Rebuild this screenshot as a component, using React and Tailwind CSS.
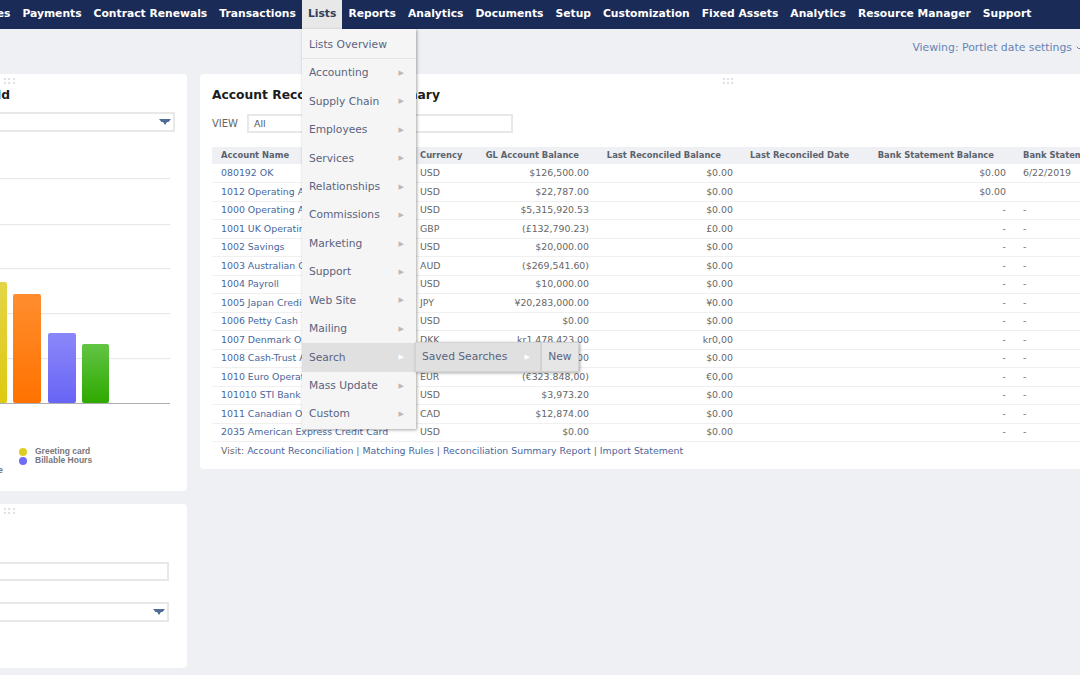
import { ChevronDown } from 'lucide-react'

const NAV = ['Payments', 'Contract Renewals', 'Transactions', 'Lists', 'Reports', 'Analytics', 'Documents', 'Setup', 'Customization', 'Fixed Assets', 'Analytics', 'Resource Manager', 'Support']

const MENU = ['Accounting', 'Supply Chain', 'Employees', 'Services', 'Relationships', 'Commissions', 'Marketing', 'Support', 'Web Site', 'Mailing', 'Search', 'Mass Update', 'Custom']

const ROWS = [
    ['080192 OK', 'USD', '$126,500.00', '$0.00', '$0.00', '6/22/2019'],
    ['1012 Operating Account', 'USD', '$22,787.00', '$0.00', '$0.00', ''],
    ['1000 Operating Account', 'USD', '$5,315,920.53', '$0.00', '-', '-'],
    ['1001 UK Operating', 'GBP', '(£132,790.23)', '£0.00', '-', '-'],
    ['1002 Savings', 'USD', '$20,000.00', '$0.00', '-', '-'],
    ['1003 Australian Operating', 'AUD', '($269,541.60)', '$0.00', '-', '-'],
    ['1004 Payroll', 'USD', '$10,000.00', '$0.00', '-', '-'],
    ['1005 Japan Credit Card', 'JPY', '¥20,283,000.00', '¥0.00', '-', '-'],
    ['1006 Petty Cash', 'USD', '$0.00', '$0.00', '-', '-'],
    ['1007 Denmark Operating', 'DKK', 'kr1.478.423,00', 'kr0,00', '-', '-'],
    ['1008 Cash-Trust Account', 'USD', '$48,000.00', '$0.00', '-', '-'],
    ['1010 Euro Operating', 'EUR', '(€323.848,00)', '€0,00', '-', '-'],
    ['101010 STI Bank', 'USD', '$3,973.20', '$0.00', '-', '-'],
    ['1011 Canadian Operating', 'CAD', '$12,874.00', '$0.00', '-', '-'],
    ['2035 American Express Credit Card', 'USD', '$0.00', '$0.00', '-', '-'],
]

function DragDots() {
    return (
        <div className="grid grid-cols-3 gap-x-[2px] gap-y-[2px] w-[11px]">
            {[0, 1, 2, 3, 4, 5].map(i => <span key={i} className="w-[2px] h-[2px] bg-[#dfe1e6]" />)}
        </div>
    )
}

function Caret({ className }) {
    return (
        <svg width="12" height="6" viewBox="0 0 12 6" className={className}>
            <path d="M0 0H12L9.5 3H8L6 6L4 3H2.5Z" fill="#4d6c96" />
        </svg>
    )
}

function Arrow({ white }) {
    return <span className={`text-[7px] ${white ? 'text-white' : 'text-[#b9b9b9]'}`}>▶</span>
}

function ListsMenu() {
    return (
        <div className="absolute left-0 top-[29px] w-[114px] bg-[#f5f5f5] shadow-[1px_1px_3px_rgba(0,0,0,0.35)] z-20 text-[10.7px] text-[#5a6480] font-normal">
            <div className="h-[30px] flex items-center pt-[3px] px-[7px] border-b border-[#e4e4e4]">Lists Overview</div>
            {MENU.map(item => (
                <div
                    key={item}
                    className={`relative h-[28.45px] flex items-center justify-between pl-[7px] pr-[12px] ${item === 'Search' ? 'bg-[#e0e0e0]' : ''}`}
                >
                    <span>{item}</span>
                    <Arrow white={item === 'Search'} />
                    {item === 'Search' && (
                        <div className="absolute left-[113px] -top-[1px] flex h-[30px] shadow-[1px_1px_3px_rgba(0,0,0,0.35)]">
                            <div className="w-[126px] flex items-center justify-between pl-[6px] pr-[10px] bg-[#e0e0e0] border border-[#d4d4d4]">
                                <span>Saved Searches</span>
                                <Arrow white />
                            </div>
                            <div className="w-[38px] flex items-center justify-center bg-[#e6e6e6] border border-[#d0d0d0]">New</div>
                        </div>
                    )}
                </div>
            ))}
        </div>
    )
}

function BarChart() {
    return (
        <svg width="300" height="270" viewBox="0 0 300 270" className="block">
            <defs>
                <linearGradient id="yellow" x1="0" y1="0" x2="0" y2="1"><stop offset="0" stopColor="#e3d547" /><stop offset="1" stopColor="#dfc90f" /></linearGradient>
                <linearGradient id="orange" x1="0" y1="0" x2="0" y2="1"><stop offset="0" stopColor="#ff8d2e" /><stop offset="1" stopColor="#ff7200" /></linearGradient>
                <linearGradient id="purple" x1="0" y1="0" x2="0" y2="1"><stop offset="0" stopColor="#8b87f9" /><stop offset="1" stopColor="#6864f5" /></linearGradient>
                <linearGradient id="green" x1="0" y1="0" x2="0" y2="1"><stop offset="0" stopColor="#62c444" /><stop offset="1" stopColor="#2eaa00" /></linearGradient>
            </defs>
            {[38, 84, 128, 173, 218].map(y => <rect key={y} x="0" y={y} width="283" height="1.2" fill="#e8e8e8" />)}
            <rect x="92" y="142" width="28" height="121" rx="2" fill="url(#yellow)" />
            <rect x="126" y="154" width="28" height="109" rx="2" fill="url(#orange)" />
            <rect x="161" y="193" width="28" height="70" rx="2" fill="url(#purple)" />
            <rect x="195" y="204" width="27" height="59" rx="2" fill="url(#green)" />
            <rect x="0" y="263" width="283" height="1" fill="#adadad" />
        </svg>
    )
}

function LegendRow({ color, label }) {
    return (
        <div className="flex items-center h-[9px] gap-[8px]">
            <span className="w-[8px] h-[8px] rounded-full" style={{ background: color }} />
            <span>{label}</span>
        </div>
    )
}

export default function App() {
    return (
        <div className="h-[675px] w-[1080px] overflow-hidden bg-[#eef0f4] font-['DejaVu_Sans',sans-serif] relative">

            {/* Top nav */}
            <div className="h-[29px] bg-[#1a2b58] flex items-center text-white font-bold text-[10.75px] -ml-[28px] whitespace-nowrap">
                <div className="px-[6px]">Sales</div>
                {NAV.map((item, i) => (
                    <div
                        key={i}
                        className={`relative h-full flex items-center px-[6px] ${item === 'Lists' ? 'bg-[#e8e8e8] text-[#333c58]' : ''}`}
                    >
                        {item}
                        {item === 'Lists' && <ListsMenu />}
                    </div>
                ))}
            </div>

            <div className="h-[45px] flex justify-end items-start pt-[11px] -mr-[3px] text-[10.85px] text-[#6585b5]">
                <span>Viewing: Portlet date settings</span>
                <ChevronDown size={8} strokeWidth={3} className="ml-[3px] mt-[4px]" />
            </div>

            <div className="flex items-start gap-[13px] -ml-[113px]">

                {/* Left column */}
                <div className="w-[300px] flex-none flex flex-col gap-[13px]">
                    <div className="h-[417px] bg-white rounded-[4px] pt-[4px]">
                        <div className="flex justify-end pr-[172px]"><DragDots /></div>
                        <div className="text-right pr-[177px] mt-[2px] text-[12.3px] font-bold text-[#1c1c1c] leading-[18px]">Sales by Field</div>
                        <div className="mx-[12px] mt-[8px] h-[20px] border-2 border-[#e8e8e8] flex items-center justify-end pr-[2px]">
                            <Caret />
                        </div>
                        <div className="mt-[8px]"><BarChart /></div>
                        <div className="pl-[132px] mt-[37px] text-[8.5px] font-bold text-[#77777f] font-['Liberation_Sans',sans-serif]">
                            <LegendRow color="#e0cd22" label="Greeting card" />
                            <LegendRow color="#6f6cf6" label="Billable Hours" />
                        </div>
                        <div className="w-[116px] text-right text-[8.5px] font-bold text-[#77777f] font-['Liberation_Sans',sans-serif] -mt-[1px]">Service</div>
                    </div>

                    <div className="h-[164px] bg-white rounded-[4px] pt-[4px] pr-[18px]">
                        <div className="flex justify-end pr-[154px]"><DragDots /></div>
                        <div className="mt-[48px] h-[19px] border-2 border-[#e8e8e8]" />
                        <div className="mt-[21px] h-[20px] border-2 border-[#e8e8e8] flex items-center justify-end pr-[2px]">
                            <Caret />
                        </div>
                    </div>
                </div>

                {/* Reconciliation portlet */}
                <div className="w-[900px] flex-none h-[395px] bg-white rounded-[4px] pt-[4px] px-[12px]">
                    <div className="flex justify-center w-[1032px]"><DragDots /></div>
                    <div className="mt-[2px] text-[12.3px] font-bold text-[#1c1c1c] leading-[18px]">Account Reconciliation Summary</div>
                    <div className="mt-[10px] flex items-center h-[19px]">
                        <span className="w-[35px] text-[10px] text-[#666]">VIEW</span>
                        <div className="w-[266px] h-[19px] border-2 border-[#e8e8e8] pl-[5px] pt-[1px] text-[9.4px] text-[#555] flex items-center">All</div>
                    </div>

                    <table className="mt-[14px] table-fixed w-[876px] text-[9.4px] text-[#666] border-collapse">
                        <colgroup>
                            <col className="w-[199px]" />
                            <col className="w-[48px]" />
                            <col className="w-[139px]" />
                            <col className="w-[144px]" />
                            <col className="w-[126px]" />
                            <col className="w-[147px]" />
                            <col className="w-[73px]" />
                        </colgroup>
                        <thead>
                            <tr className="h-[17px] bg-[#eef0f4] text-[8.4px] font-bold text-[#5c626d]">
                                <th className="pl-[9px] text-left whitespace-nowrap">Account Name</th>
                                <th className="pl-[9px] text-left whitespace-nowrap">Currency</th>
                                <th className="pr-[19px] text-right whitespace-nowrap">GL Account Balance</th>
                                <th className="pr-[21px] text-right whitespace-nowrap">Last Reconciled Balance</th>
                                <th className="pl-[8px] text-left whitespace-nowrap">Last Reconciled Date</th>
                                <th className="pr-[21px] text-right whitespace-nowrap">Bank Statement Balance</th>
                                <th className="pl-[8px] text-left whitespace-nowrap overflow-hidden">Bank Statement Date</th>
                            </tr>
                        </thead>
                        <tbody>
                            {ROWS.map(r => (
                                <tr key={r[0]} className="h-[18.5px] border-b border-[#f0f0f0]">
                                    <td className="pl-[9px] text-[#48679c] whitespace-nowrap">{r[0]}</td>
                                    <td className="pl-[9px]">{r[1]}</td>
                                    <td className="pr-[9px] text-right">{r[2]}</td>
                                    <td className="pr-[9px] text-right">{r[3]}</td>
                                    <td />
                                    <td className="pr-[9px] text-right">{r[4]}</td>
                                    <td className="pl-[8px]">{r[5]}</td>
                                </tr>
                            ))}
                        </tbody>
                    </table>

                    <div className="mt-[2px] pl-[9px] text-[9.4px] text-[#666] whitespace-nowrap">
                        Visit: <span className="text-[#48679c]">Account Reconciliation</span> | <span className="text-[#48679c]">Matching Rules</span> | <span className="text-[#48679c]">Reconciliation Summary Report</span> | <span className="text-[#48679c]">Import Statement</span>
                    </div>
                </div>
            </div>
        </div>
    )
}
